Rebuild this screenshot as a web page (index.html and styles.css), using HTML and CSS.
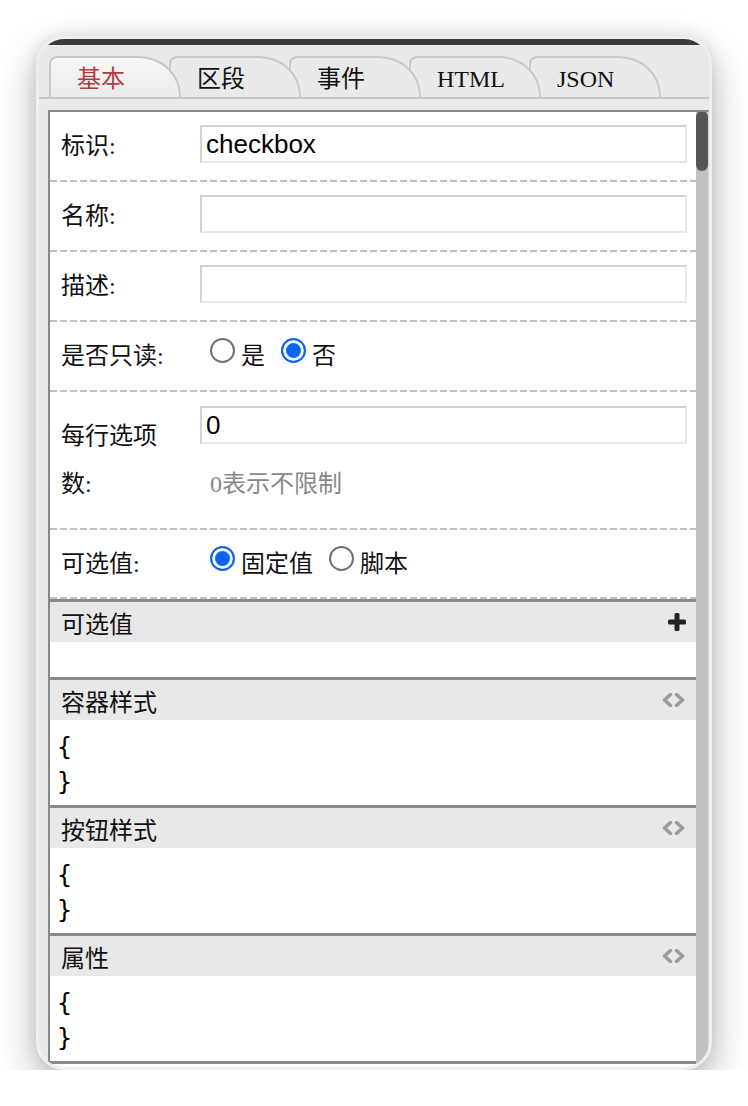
FILE: index.html
```html
<!DOCTYPE html>
<html>
<head>
    <meta charset="utf-8">
    <title>属性面板</title>
    <link rel="stylesheet" href="styles.css">
</head>
<body>
    <div class="window">
        <div class="tabs">
            <div class="tab active">基本</div>
            <div class="tab">区段</div>
            <div class="tab">事件</div>
            <div class="tab">HTML</div>
            <div class="tab">JSON</div>
        </div>

        <div class="panel">
            <div class="panel-body">
                <div class="field">
                    <div class="field-label">标识:</div>
                    <div class="field-value"><input type="text" class="text-input" value="checkbox"></div>
                </div>
                <div class="field">
                    <div class="field-label">名称:</div>
                    <div class="field-value"><input type="text" class="text-input" value=""></div>
                </div>
                <div class="field">
                    <div class="field-label">描述:</div>
                    <div class="field-value"><input type="text" class="text-input" value=""></div>
                </div>
                <div class="field">
                    <div class="field-label">是否只读:</div>
                    <div class="field-value radios">
                        <label><input type="radio" name="readonly" class="radio">是</label>
                        <label><input type="radio" name="readonly" class="radio" checked>否</label>
                    </div>
                </div>
                <div class="field tall">
                    <div class="field-label">每行选项数:</div>
                    <div class="field-value stacked">
                        <input type="text" class="text-input" value="0">
                        <div class="hint">0表示不限制</div>
                    </div>
                </div>
                <div class="field last">
                    <div class="field-label">可选值:</div>
                    <div class="field-value radios">
                        <label><input type="radio" name="source" class="radio" checked>固定值</label>
                        <label><input type="radio" name="source" class="radio">脚本</label>
                    </div>
                </div>

                <div class="section">
                    <div class="section-head">
                        <span>可选值</span>
                        <svg class="icon-plus" width="18" height="18" viewBox="0 0 18 18">
                            <rect x="6.5" y="0" width="5" height="18" rx="1.5" fill="#222"/>
                            <rect x="0" y="6.5" width="18" height="5" rx="1.5" fill="#222"/>
                        </svg>
                    </div>
                    <div class="section-list"></div>
                </div>

                <div class="section">
                    <div class="section-head">
                        <span>容器样式</span>
                        <svg class="icon-code" width="25" height="14" viewBox="0 0 25 14">
                            <path d="M9.5 1.5 L3.5 7 L9.5 12.5 M15.5 1.5 L21.5 7 L15.5 12.5" fill="none" stroke="#9a9a9a" stroke-width="3.6" stroke-linecap="round" stroke-linejoin="round"/>
                        </svg>
                    </div>
                    <div class="section-code">{<br>}</div>
                </div>

                <div class="section">
                    <div class="section-head">
                        <span>按钮样式</span>
                        <svg class="icon-code" width="25" height="14" viewBox="0 0 25 14">
                            <path d="M9.5 1.5 L3.5 7 L9.5 12.5 M15.5 1.5 L21.5 7 L15.5 12.5" fill="none" stroke="#9a9a9a" stroke-width="3.6" stroke-linecap="round" stroke-linejoin="round"/>
                        </svg>
                    </div>
                    <div class="section-code">{<br>}</div>
                </div>

                <div class="section end">
                    <div class="section-head">
                        <span>属性</span>
                        <svg class="icon-code" width="25" height="14" viewBox="0 0 25 14">
                            <path d="M9.5 1.5 L3.5 7 L9.5 12.5 M15.5 1.5 L21.5 7 L15.5 12.5" fill="none" stroke="#9a9a9a" stroke-width="3.6" stroke-linecap="round" stroke-linejoin="round"/>
                        </svg>
                    </div>
                    <div class="section-code">{<br>}</div>
                </div>
            </div>
            <div class="scrollbar"><div class="thumb"></div></div>
        </div>
        <div class="footer"></div>
    </div>
</body>
</html>
```

FILE: styles.css
```css
body {
    margin: 0;
    background: #ffffff;
    font-family: "Liberation Serif", "Noto Sans CJK SC", serif;
    font-size: 24px;
    color: #111;
}

.window {
    margin: 36px 0 0 36px;
    width: 676px;
    height: 1034px;
    box-sizing: border-box;
    border: 3px solid #efefef;
    border-radius: 28px;
    background: #e9e9e9;
    overflow: hidden;
    display: flex;
    flex-direction: column;
    box-shadow: 0 16px 40px rgba(0, 0, 0, 0.28), 0 0 16px rgba(0, 0, 0, 0.1);
}

/* tabs */
.tabs {
    display: flex;
    border-top: 6px solid #3b3b3b;
    padding: 11px 0 0 10px;
    border-bottom: 2px solid #c6c6c6;
    flex-shrink: 0;
}

.tab {
    position: relative;
    width: 132px;
    height: 41px;
    box-sizing: border-box;
    border: 2px solid #c8c8c8;
    border-bottom: none;
    border-radius: 8px 42px 0 0 / 8px 40px 0 0;
    background: #e9e9e9;
    padding: 2px 0 0 26px;
    line-height: 39px;
    color: #111;
}

.tab + .tab {
    margin-left: -12px;
}

.tab:nth-child(1) { z-index: 5; }
.tab:nth-child(2) { z-index: 4; }
.tab:nth-child(3) { z-index: 3; }
.tab:nth-child(4) { z-index: 2; }
.tab:nth-child(5) { z-index: 1; }

.tab.active {
    background: linear-gradient(#f7f7f7, #ececec);
    color: #b33b3d;
}

/* panel */
.panel {
    margin: 11px 0 0 9px;
    display: flex;
    border-top: 2px solid #888;
    border-left: 2px solid #888;
    border-right: 1px solid #d8d8d8;
    background: #fff;
    height: 952px;
    flex-shrink: 0;
    overflow: hidden;
}

.panel-body {
    flex: 1;
}

.scrollbar {
    width: 12px;
    background: #c1c1c1;
    flex-shrink: 0;
}

.thumb {
    height: 60px;
    margin-top: -1px;
    border-radius: 6px;
    background: #555;
}

.footer {
    flex: 1;
    background: #fff;
}

/* form rows */
.field {
    display: flex;
    align-items: center;
    min-height: 68px;
    padding-bottom: 2px;
    background: repeating-linear-gradient(to right, #c2c2c2 0 7px, transparent 7px 10px) left bottom / 100% 2px no-repeat;
}

.field.tall {
    min-height: 136px;
}

.field.last {
    min-height: 67px;
}

.field-label {
    width: 150px;
    flex-shrink: 0;
    box-sizing: border-box;
    padding: 0 30px 0 11px;
    line-height: 48px;
}

.field-value {
    flex: 1;
    padding-right: 9px;
}

.text-input {
    display: block;
    width: 100%;
    height: 38px;
    box-sizing: border-box;
    margin: 0 0 4px 0;
    border: 2px solid;
    border-color: #d2d2d2 #e9e9e9 #e9e9e9 #d2d2d2;
    padding: 0 4px;
    font-family: "Liberation Sans", Arial, sans-serif;
    font-size: 26px;
    color: #000;
    outline: none;
}

.stacked {
    padding-bottom: 6px;
}

.hint {
    margin-top: 16px;
    padding-left: 10px;
    line-height: 48px;
    color: #888;
}

.radios {
    padding-left: 10px;
    line-height: 48px;
}

.radios label {
    margin-right: 10px;
}

.radio {
    -webkit-appearance: none;
    appearance: none;
    width: 25px;
    height: 25px;
    box-sizing: border-box;
    margin: 0 6px 0 0;
    border: 2px solid #6f6f6f;
    border-radius: 50%;
    background: #fff;
    vertical-align: 1px;
}

.radio:checked {
    border-color: #0d63f5;
    background: #0d63f5;
    box-shadow: inset 0 0 0 3px #fff;
}

/* sections */
.section {
    border-top: 3px solid #888;
}

.section.end {
    border-bottom: 3px solid #888;
}

.section-head {
    display: flex;
    align-items: center;
    justify-content: space-between;
    height: 40px;
    padding: 0 11px 0 11px;
    background: #e8e8e8;
}

.icon-plus {
    margin-right: -1px;
}

.icon-code {
    margin-right: -1px;
}

.section-list {
    height: 35px;
}

.section-code {
    height: 70px;
    padding: 9px 7px 6px;
    font-family: "DejaVu Sans Mono", monospace;
    font-size: 25px;
    line-height: 35px;
    color: #000;
}
```
